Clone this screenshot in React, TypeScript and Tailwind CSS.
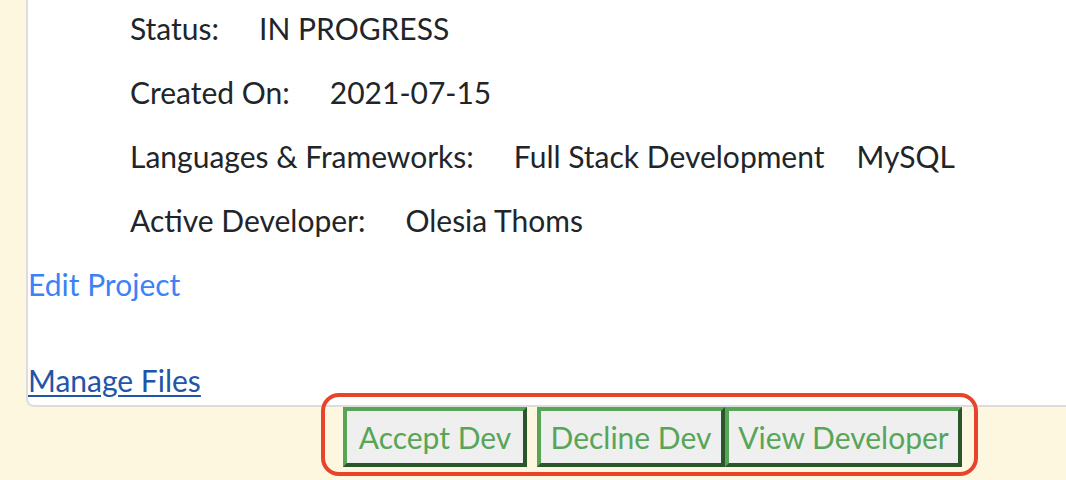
import React from "react";

const rows = [
  { label: "Status:", values: ["IN PROGRESS"] },
  { label: "Created On:", values: ["2021-07-15"] },
  { label: "Languages & Frameworks:", values: ["Full Stack Development", "MySQL"] },
  { label: "Active Developer:", values: ["Olesia Thoms"] },
];

const btn =
  "h-[60px] border-4 border-t-[#57a657] border-l-[#57a657] border-r-[#2b552b] border-b-[#2b552b] bg-[#efefef] text-[#57a657] text-[30px] leading-none flex items-center justify-center";

export default function App() {
  return (
    <div
      className="relative h-[480px] w-full overflow-hidden bg-[#fef7e0] text-[#212529]"
      style={{ fontFamily: "Lato, 'Noto Sans', sans-serif" }}
    >
      {/* project card */}
      <div className="ml-[26px] -mt-[4px] bg-white border-l-2 border-b-2 border-[#dddddd] rounded-bl-[8px] pb-[5px]">
        {rows.map((r, i) => (
          <div key={i} className="h-[64px] pl-[102px] flex items-center gap-[40px] text-[30px]">
            <span>{r.label}</span>
            {r.values.map((v, j) => (
              <span key={j} className={j > 0 ? "-ml-[8px]" : ""}>
                {v}
              </span>
            ))}
          </div>
        ))}
        <div className="h-[64px] flex items-center">
          <a href="#" className="text-[30px] text-[#3b82f6]">
            Edit Project
          </a>
        </div>
        <div className="h-[40px] mt-[44px] flex items-center">
          <a href="#" className="text-[30px] text-[#2155a8] underline decoration-2 underline-offset-[3px]">
            Manage Files
          </a>
        </div>
      </div>

      {/* dev actions */}
      <div className="flex pl-[343px]">
        <button className={`${btn} w-[184px] mr-[10px]`}>Accept Dev</button>
        <button className={`${btn} w-[188px]`}>Decline Dev</button>
        <button className={`${btn} w-[237px]`}>View Developer</button>
      </div>

      {/* annotation outline */}
      <div className="absolute left-[321px] top-[393px] w-[657px] h-[83px] border-4 border-[#e8442b] rounded-[18px] pointer-events-none" />
    </div>
  );
}
